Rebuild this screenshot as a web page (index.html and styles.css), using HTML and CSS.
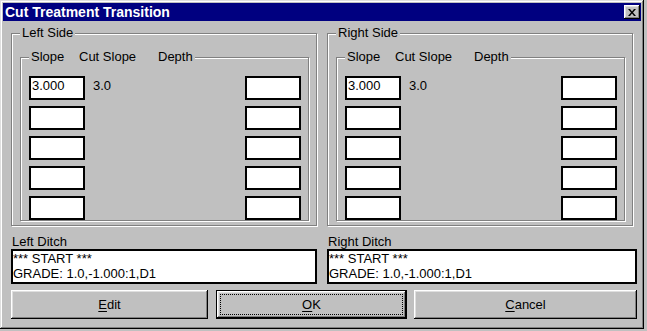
FILE: index.html
```html
<!DOCTYPE html>
<html lang="en">
<head>
  <meta charset="UTF-8" />
  <title>Cut Treatment Transition</title>
  <link rel="stylesheet" href="styles.css">
</head>
<body>
  <div class="window">
    <div class="titlebar">
      <span class="title">Cut Treatment Transition</span>
      <div class="close">
        <svg width="8" height="7" viewBox="0 0 8 7"><path d="M0 0h2l2 2.5L6 0h2L5 3.5 8 7H6L4 4.5 2 7H0l3-3.5z" fill="#000"/></svg>
      </div>
    </div>

    <div class="content">
      <div class="sides">
        <fieldset class="group side">
          <legend>Left Side</legend>
          <fieldset class="group slopes">
            <legend><span class="col-slope">Slope</span><span class="col-cut">Cut Slope</span><span>Depth</span></legend>
            <div class="rows">
              <div class="edit">3.000</div><div class="cut">3.0</div><div class="edit"></div>
              <div class="edit"></div><div class="cut"></div><div class="edit"></div>
              <div class="edit"></div><div class="cut"></div><div class="edit"></div>
              <div class="edit"></div><div class="cut"></div><div class="edit"></div>
              <div class="edit"></div><div class="cut"></div><div class="edit"></div>
            </div>
          </fieldset>
        </fieldset>

        <fieldset class="group side">
          <legend>Right Side</legend>
          <fieldset class="group slopes">
            <legend><span class="col-slope">Slope</span><span class="col-cut">Cut Slope</span><span>Depth</span></legend>
            <div class="rows">
              <div class="edit">3.000</div><div class="cut">3.0</div><div class="edit"></div>
              <div class="edit"></div><div class="cut"></div><div class="edit"></div>
              <div class="edit"></div><div class="cut"></div><div class="edit"></div>
              <div class="edit"></div><div class="cut"></div><div class="edit"></div>
              <div class="edit"></div><div class="cut"></div><div class="edit"></div>
            </div>
          </fieldset>
        </fieldset>
      </div>

      <div class="ditches">
        <div class="ditch">
          <div class="ditch-label">Left Ditch</div>
          <div class="ditch-box">
            <div>*** START ***</div>
            <div>GRADE: 1.0,-1.000:1,D1</div>
          </div>
        </div>
        <div class="ditch">
          <div class="ditch-label">Right Ditch</div>
          <div class="ditch-box">
            <div>*** START ***</div>
            <div>GRADE: 1.0,-1.000:1,D1</div>
          </div>
        </div>
      </div>

      <div class="buttons">
        <div class="btn btn-edit"><u>E</u>dit</div>
        <div class="btn btn-ok"><u>O</u>K</div>
        <div class="btn btn-cancel"><u>C</u>ancel</div>
      </div>
    </div>
  </div>
</body>
</html>
```

FILE: styles.css
```css
html, body {
  margin: 0;
  padding: 0;
  background: #c0c0c0;
  font-family: "Liberation Sans", Arial, sans-serif;
  font-size: 13px;
  color: #000;
}

.window {
  width: 644px;
  height: 329px;
  box-sizing: border-box;
  padding: 3px;
  background: #c0c0c0;
  box-shadow: inset -1px -1px #000, inset 1px 1px #dfdfdf,
              inset -2px -2px #808080, inset 2px 2px #fff;
}

.titlebar {
  height: 18px;
  background: #000080;
  display: flex;
  align-items: center;
  justify-content: space-between;
  padding-left: 2px;
}

.title {
  color: #fff;
  font-weight: bold;
  font-size: 14px;
  line-height: 18px;
}

.close {
  width: 16px;
  height: 14px;
  margin-right: 1px;
  background: #c0c0c0;
  box-sizing: border-box;
  display: flex;
  align-items: center;
  justify-content: center;
  box-shadow: inset -1px -1px #000, inset 1px 1px #fff,
              inset -2px -2px #808080, inset 2px 2px #dfdfdf;
}

.close svg {
  display: block;
  margin-left: -1px;
}

.content {
  padding: 5px 0 0 8px;
}

.sides {
  display: flex;
  gap: 10px;
}

fieldset.group {
  margin: 0;
  min-width: 0;
  border: 1px solid #808080;
  box-shadow: inset 1px 1px #fff, 1px 1px #fff;
}

fieldset.group legend {
  padding: 0 2px;
  line-height: 14px;
  background: #c0c0c0;
}

.side {
  width: 306px;
  box-sizing: border-box;
  padding: 10px 7px 4px 8px;
}

.slopes {
  padding: 12px 7px 0 8px;
}

.col-slope {
  display: inline-block;
  width: 48px;
}

.col-cut {
  display: inline-block;
  width: 79px;
}

.rows {
  display: grid;
  grid-template-columns: 56px 1fr 56px;
  grid-auto-rows: 24px;
  row-gap: 6px;
}

.edit {
  background: #fff;
  border: 2px solid #000;
  padding: 0 0 0 1px;
  line-height: 15px;
}

.cut {
  padding: 2px 0 0 8px;
  line-height: 15px;
}

.ditches {
  display: grid;
  grid-template-columns: 306px 310px;
  column-gap: 10px;
  margin-top: 8px;
}

.ditch-label {
  line-height: 15px;
  padding-left: 1px;
}

.ditch-box {
  height: 35px;
  box-sizing: border-box;
  background: #fff;
  border: 2px solid #000;
  padding: 0;
  line-height: 15px;
}

.buttons {
  display: flex;
  margin-top: 6px;
}

.btn {
  height: 29px;
  box-sizing: border-box;
  display: flex;
  align-items: center;
  justify-content: center;
  background: #c0c0c0;
  box-shadow: inset -1px -1px #000, inset 1px 1px #fff,
              inset -2px -2px #808080, inset 2px 2px #dfdfdf;
}

.btn u {
  text-decoration-thickness: 1px;
  text-underline-offset: 2px;
}

.btn-edit {
  width: 197px;
}

.btn-ok {
  width: 191px;
  margin-left: 8px;
  border: 1px solid #000;
  outline: 1px dotted #000;
  outline-offset: -5px;
}

.btn-cancel {
  width: 223px;
  margin-left: 7px;
}
```
